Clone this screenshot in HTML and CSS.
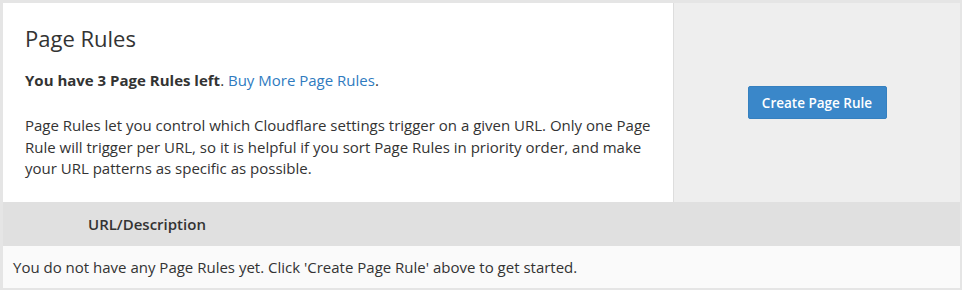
FILE: index.html
```html
<!DOCTYPE html>
<html>
<head>
<meta charset="utf-8">
<link rel="stylesheet" href="styles.css">
</head>
<body>
<div class="card">
  <div class="top">
    <div class="info">
      <h2 class="title">Page Rules</h2>
      <p class="left"><strong>You have 3 Page Rules left</strong>. <a href="#">Buy More Page Rules</a>.</p>
      <p class="desc">Page Rules let you control which Cloudflare settings trigger on a given URL. Only one Page Rule will trigger per URL, so it is helpful if you sort Page Rules in priority order, and make your URL patterns as specific as possible.</p>
    </div>
    <div class="action">
      <button class="btn">Create Page Rule</button>
    </div>
  </div>
  <div class="thead">URL/Description</div>
  <div class="empty">You do not have any Page Rules yet. Click 'Create Page Rule' above to get started.</div>
</div>
</body>
</html>
```
FILE: styles.css
```css
html, body {
  margin: 0;
  padding: 0;
  background: #ffffff;
}
body {
  font-family: "Open Sans", "Liberation Sans", sans-serif;
  color: #333333;
  font-size: 15px;
}
.card {
  border-style: solid;
  border-color: #e5e5e5;
  border-width: 3px 2px 2px 3px;
}
.top {
  display: flex;
  height: 199px;
}
.info {
  width: 648px;
  flex: none;
  background: #ffffff;
  border-right: 1px solid #dddddd;
  padding: 0 0 0 22px;
}
.title {
  font-size: 22px;
  font-weight: 400;
  line-height: 30px;
  margin: 20px 0 0 0;
  color: #333333;
}
.left {
  margin: 17px 0 0 0;
  line-height: 21px;
}
.left strong {
  font-weight: 700;
}
.left a {
  color: #2f7bbf;
  text-decoration: none;
}
.desc {
  margin: 24px 0 0 0;
  line-height: 21.5px;
}
.action {
  flex: 1;
  background: #eeeeee;
  display: flex;
  align-items: center;
  justify-content: center;
}
.btn {
  width: 139px;
  height: 33px;
  background: #3a87c9;
  color: #ffffff;
  border: 1px solid #3580bf;
  border-radius: 2px;
  font-family: "Open Sans", "Liberation Sans", sans-serif;
  font-size: 13.5px;
  font-weight: 600;
  padding: 0;
}
.thead {
  background: #e0e0e0;
  height: 44px;
  line-height: 44px;
  padding-left: 85px;
  font-weight: 600;
}
.empty {
  background: #fafafa;
  height: 42px;
  line-height: 42px;
  padding-left: 10px;
}
```
